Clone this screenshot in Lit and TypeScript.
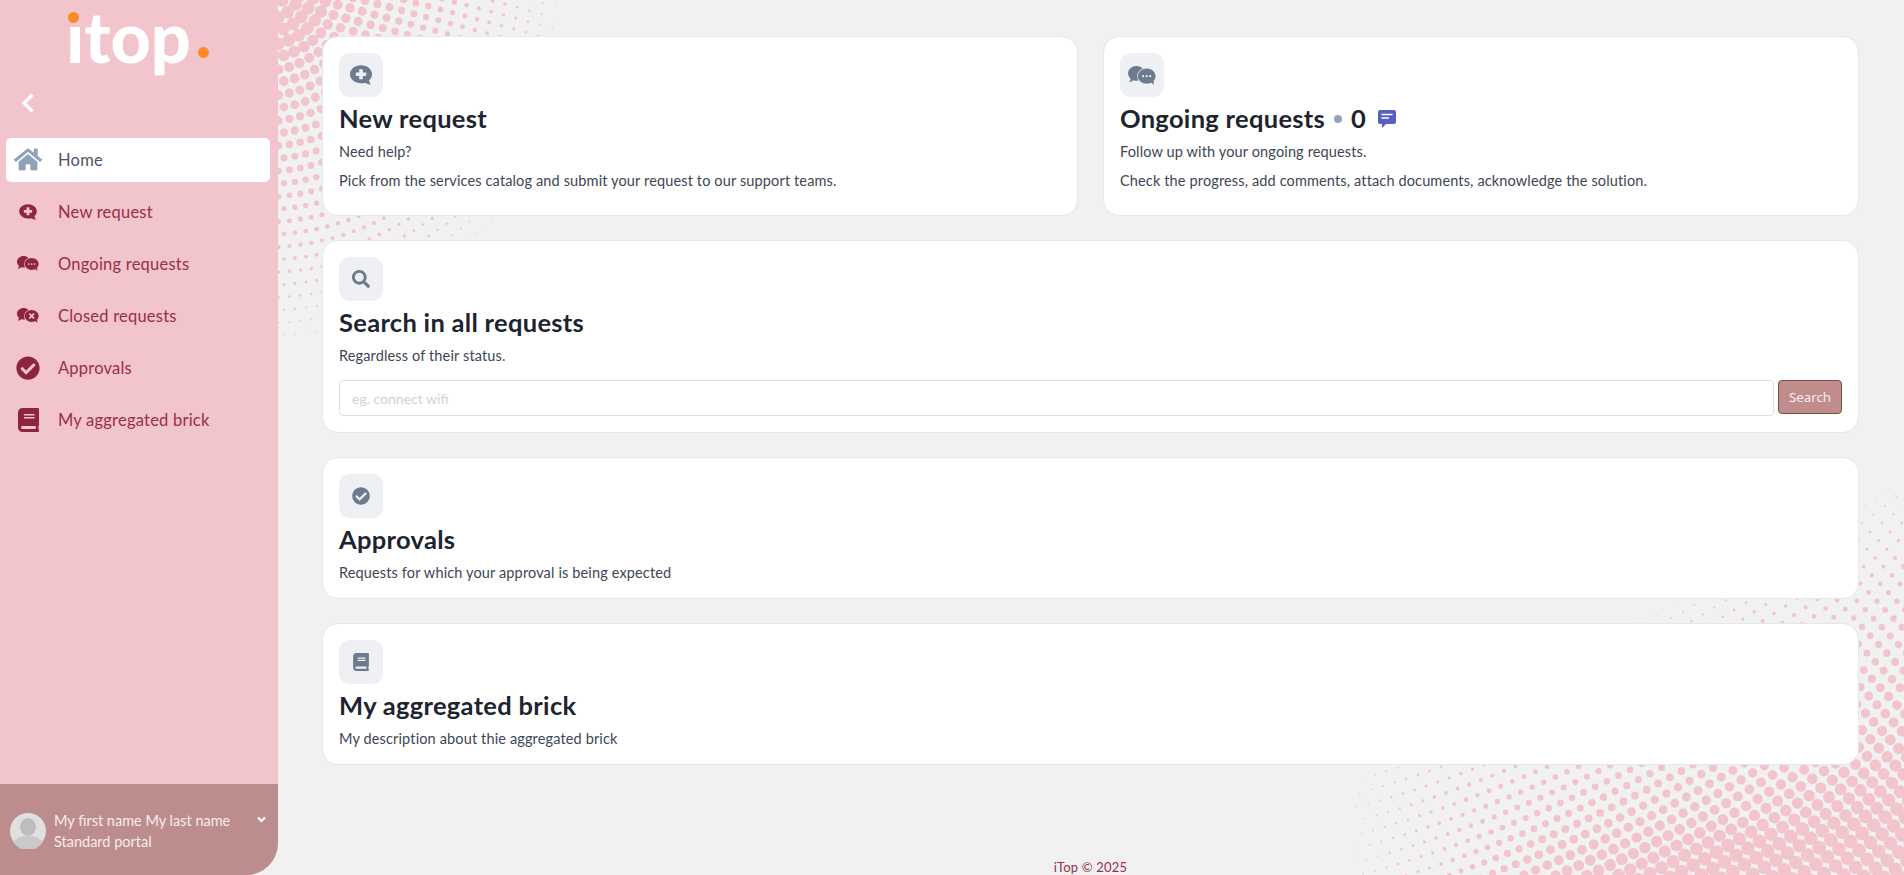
import { LitElement, html, css, svg } from "lit";
import { customElement } from "lit/decorators.js";

const PINK = "#f2c4cb";

function dot(x: number, y: number, r: number) {
  const R = r.toFixed(2);
  return `M${(x - r).toFixed(1)} ${y.toFixed(1)}a${R} ${R} 0 1 0 ${(2 * r).toFixed(2)} 0a${R} ${R} 0 1 0 ${(-2 * r).toFixed(2)} 0z`;
}

function bottomRight(): string {
  let d = "";
  const row = 13;
  const step = 11.6;
  for (let v = -30; v < 70; v++) {
    for (let i = 0; i < 60; i++) {
      const u = i * step + (v % 2 ? step / 2 : 0);
      const x = 1340 + u + v * 2.5;
      const curve = 0.25 * u + 0.00045 * u * u;
      const y = 880 + v * row - curve;
      const dx = 1904 - x;
      const dy = 875 - y;
      if (dx < -8 || dy < -8) continue;
      const t = Math.max(dx / 550, (dy + 0.53 * dx) / 395);
      if (t >= 1) continue;
      const near = Math.min(1, Math.max(0, (470 - dx) / 120));
      const boost = 2 * near * Math.max(0, 1 - Math.max(dy, 0) / 60);
      const r = Math.min(6.8, 7.5 * (1 - Math.max(t, 0)) + 0.6 + boost);
      d += dot(x, y, r);
    }
  }
  return d;
}

function topLeft(): string {
  let d = "";
  const cx = 262;
  const cy = -22;
  for (let k = 0; k < 32; k++) {
    const rad = 30 + k * 12.6;
    const da = 11 / rad;
    const off = k % 2 ? da / 2 : 0;
    for (let a = off; a < Math.PI / 2 + 0.2; a += da) {
      const x = cx + rad * Math.sin(a);
      const y = cy + rad * Math.cos(a);
      if (x < 274 || y < -8) continue;
      const t = Math.hypot((x - 278) / 285, y / 345);
      if (t >= 1) continue;
      const r = Math.min(6.4, 5.6 * (1 - t) + 0.5 + 3.2 * Math.max(0, (0.2 - t) / 0.2));
      d += dot(x, y, r);
    }
  }
  return d;
}

const HOME = "M280.37 148.26L96 300.11V464a16 16 0 0 0 16 16l112.06-.29a16 16 0 0 0 15.92-16V368a16 16 0 0 1 16-16h64a16 16 0 0 1 16 16v95.64a16 16 0 0 0 16 16.05L464 480a16 16 0 0 0 16-16V300L295.67 148.26a12.19 12.19 0 0 0-15.3 0zM571.6 251.47L488 182.56V44.05a12 12 0 0 0-12-12h-56a12 12 0 0 0-12 12v72.61L318.47 43a48 48 0 0 0-61 0L4.34 251.47a12 12 0 0 0-1.6 16.9l25.5 31A12 12 0 0 0 45.15 301l235.22-193.74a12.19 12.19 0 0 1 15.3 0L530.9 301a12 12 0 0 0 16.9-1.6l25.5-31a12 12 0 0 0-1.7-16.93z";
const CHECK = "M504 256c0 136.967-111.033 248-248 248S8 392.967 8 256 119.033 8 256 8s248 111.033 248 248zM227.314 387.314l184-184c6.248-6.248 6.248-16.379 0-22.627l-22.627-22.627c-6.248-6.249-16.379-6.249-22.628 0L216 308.118l-70.059-70.059c-6.248-6.248-16.379-6.248-22.628 0l-22.627 22.627c-6.248 6.248-6.248 16.379 0 22.627l104 104c6.249 6.249 16.379 6.249 22.628.001z";
const BOOK = "M448 360V24c0-13.3-10.7-24-24-24H96C43 0 0 43 0 96v320c0 53 43 96 96 96h328c13.3 0 24-10.7 24-24v-16c0-7.5-3.5-14.3-8.9-18.7-4.2-15.4-4.2-59.3 0-74.7 5.4-4.3 8.9-11.1 8.9-18.6zM128 134c0-3.3 2.7-6 6-6h212c3.3 0 6 2.7 6 6v20c0 3.3-2.7 6-6 6H134c-3.3 0-6-2.7-6-6v-20zm0 64c0-3.3 2.7-6 6-6h212c3.3 0 6 2.7 6 6v20c0 3.3-2.7 6-6 6H134c-3.3 0-6-2.7-6-6v-20zm253.4 250H96c-17.7 0-32-14.3-32-32 0-17.6 14.4-32 32-32h285.4c-1.9 17.1-1.9 46.9 0 64z";
const SEARCH = "M505 442.7L405.3 343c-4.5-4.5-10.6-7-17-7H372c27.6-35.3 44-79.7 44-128C416 93.1 322.9 0 208 0S0 93.1 0 208s93.1 208 208 208c48.3 0 92.7-16.4 128-44v16.3c0 6.4 2.5 12.5 7 17l99.7 99.7c9.4 9.4 24.6 9.4 33.9 0l28.3-28.3c9.4-9.4 9.4-24.6.1-34zM208 336c-70.7 0-128-57.2-128-128 0-70.7 57.2-128 128-128 70.7 0 128 57.2 128 128 0 70.7-57.2 128-128 128z";

const solid = (w: number, h: number, vb: string, d: string) => html`<svg width=${w} height=${h} viewBox=${vb} fill="currentColor"><path fill-rule="evenodd" d=${d}></path></svg>`;

/* Round bubble with its tail at the lower right and a plus knocked out of it. */
const plusBubble = (w: number, h: number) => html`<svg width=${w} height=${h} viewBox="0 0 22 20" fill="currentColor">
  <path fill-rule="evenodd" d="M11 .3c6 0 11 3.9 11 8.9 0 2.400-1.100 4.500-2.900 6.100.1 1.500.8 3 2 4.200-2.200.1-4.200-.7-5.700-1.800-1.300.4-2.800.5-4.400.5C5 18.200 0 14.200 0 9.200 0 4.200 5 .3 11 .3zM9.200 4.200v3.300H5.800v3.400h3.400v3.300h3.600v-3.300h3.400V7.500h-3.400V4.200z"></path>
</svg>`;

const bubbles = (closed: boolean, w: number, h: number) => html`<svg width=${w} height=${h} viewBox="0 0 22 15" fill="currentColor">
  <path d="M6.600 0c3.600 0 6.500 2.600 6.500 5.800s-2.900 5.800-6.500 5.800c-.9 0-1.700-.1-2.500-.4-.8.700-1.900 1.300-3.300 1.400.7-.8 1.100-1.700 1.200-2.600C.8 8.900 0 7.400 0 5.800 0 2.600 3 0 6.600 0z"></path>
  <ellipse class="ring" cx="14.700" cy="8" rx="7" ry="6"></ellipse>
  <path d="M17.500 12.500l3 2.500c-.4-1-.4-2-.2-3.500z"></path>
  ${closed
    ? svg`<path class="mark" d="M12.900 6.200l3.600 3.600M16.500 6.200l-3.600 3.600" stroke-width="1.800" stroke-linecap="round"></path>`
    : svg`<circle class="pip" cx="11.900" cy="8" r=".85"></circle><circle class="pip" cx="14.700" cy="8" r=".85"></circle><circle class="pip" cx="17.500" cy="8" r=".85"></circle>`}
</svg>`;

@customElement("app-root")
export class AppRoot extends LitElement {
  static styles = css`
    :host {
      display: flex;
      position: relative;
      width: 100%;
      height: 100vh;
      overflow: hidden;
      background: #f1f1f1;
      font-family: "Lato", "Liberation Sans", sans-serif;
      color: #3d4654;
      --chip: #eef0f3;
    }
    .halftone {
      position: absolute;
      inset: 0;
      width: 1904px;
      height: 875px;
      pointer-events: none;
    }
    .sidebar {
      position: relative;
      flex: 0 0 278px;
      display: flex;
      flex-direction: column;
      background: #f2c4cb;
      border-bottom-right-radius: 32px;
      overflow: hidden;
      --chip: #f2c4cb;
    }
    .logo {
      position: relative;
      height: 84px;
      padding-left: 66px;
      color: #fff;
      font-size: 70px;
      font-weight: 900;
      line-height: 72px;
    }
    .logo i {
      position: absolute;
      width: 11px;
      height: 11px;
      border-radius: 50%;
      background: #fd8a28;
    }
    .logo .d1 { left: 68px; top: 12px; }
    .logo .d2 { left: 198px; top: 47px; }
    .back {
      display: flex;
      height: 54px;
      padding-left: 21px;
      align-items: center;
      padding-bottom: 16px;
      box-sizing: border-box;
    }
    nav {
      display: flex;
      flex-direction: column;
      gap: 8px;
      padding: 0 8px 0 6px;
    }
    .item {
      display: flex;
      align-items: center;
      height: 44px;
      border-radius: 5px;
      color: #9b2e49;
      font-size: 16.5px;
      letter-spacing: 0.22px;
      padding-bottom: 1px;
      box-sizing: border-box;
    }
    .item.on {
      background: #fff;
      color: #4a5568;
      --chip: #fff;
    }
    .item .ic {
      flex: 0 0 44px;
      display: flex;
      justify-content: center;
      margin-right: 8px;
      color: #8f2440;
    }
    .item.on .ic { color: #8fa3b8; }
    .ring { stroke: var(--chip); stroke-width: 1.200; paint-order: stroke; }
    .pip { fill: var(--chip); }
    .mark { stroke: var(--chip); fill: none; }
    .user {
      margin-top: auto;
      height: 91px;
      background: #bd8c8c;
      display: flex;
      align-items: center;
      padding: 3px 12px 0 10px;
      gap: 8px;
      color: #f7ecec;
      font-size: 14.5px;
      line-height: 21px;
      box-sizing: border-box;
    }
    .who { flex: 1; }
    .caret { align-self: flex-start; margin-top: 29px; }
    main {
      position: relative;
      flex: 1;
      display: flex;
      flex-direction: column;
      min-width: 0;
      padding: 36px 45px 0 44px;
      gap: 24px;
    }
    .row { display: grid; grid-template-columns: 1fr 1fr; gap: 25px; }
    .card {
      background: #fff;
      border: 1px solid #e2e8f0;
      border-radius: 16px;
      padding: 16px 16px 15px;
      min-width: 0;
    }
    .chip {
      width: 44px;
      height: 44px;
      border-radius: 11px;
      background: #eef0f3;
      color: #6b7a8c;
      display: flex;
      align-items: center;
      justify-content: center;
    }
    h2 {
      margin: 7px 0 8px;
      font-size: 25.5px;
      line-height: 29px;
      letter-spacing: 0.3px;
      font-weight: 700;
      color: #1c2430;
      display: flex;
      align-items: center;
    }
    h2 .sep {
      width: 8px;
      height: 8px;
      border-radius: 50%;
      background: #94a3b8;
      margin: 0 9px;
    }
    h2 svg { margin-left: 12px; }
    p {
      margin: 0;
      font-size: 14.5px;
      line-height: 21px;
      letter-spacing: 0.14px;
    }
    p + p { margin-top: 8px; }
    .tall p:last-child { margin-bottom: 9px; }
    .search { display: flex; gap: 4px; margin: 14px 0 1px; align-items: flex-start; }
    input {
      flex: 1;
      height: 36px;
      box-sizing: border-box;
      border: 1px solid #dcdfe3;
      border-radius: 4px;
      padding: 0 12px;
      font: inherit;
      font-size: 14px;
      background: #fff;
      min-width: 0;
    }
    input::placeholder { color: #cfd2d6; opacity: 1; }
    button {
      width: 64px;
      height: 34px;
      box-sizing: border-box;
      border: 1px solid #7a5040;
      border-radius: 4px;
      background: #c08c8c;
      color: #f8ecef;
      font-family: "Noto Sans", sans-serif;
      font-size: 13.3px;
      padding: 0;
    }
    .foot {
      margin-top: auto;
      height: 16px;
      text-align: center;
      font-size: 13px;
      letter-spacing: 0.2px;
      line-height: 16px;
      color: #9b2e49;
    }
  `;

  private tl = topLeft();
  private br = bottomRight();

  private nav(label: string, icon: unknown, on = false) {
    return html`<div class="item ${on ? "on" : ""}"><span class="ic">${icon}</span>${label}</div>`;
  }

  render() {
    return html`
      <svg class="halftone" viewBox="0 0 1904 875">
        <path d=${this.tl} fill=${PINK}></path>
        <path d=${this.br} fill=${PINK}></path>
      </svg>
      <aside class="sidebar">
        <div class="logo">ıtop<i class="d1"></i><i class="d2"></i></div>
        <div class="back">
          <svg width="13" height="20" viewBox="0 0 13 20" fill="none" stroke="#fff" stroke-width="3.2" stroke-linejoin="miter"><path d="M11.5 1.500L3 10l8.500 8.500"></path></svg>
        </div>
        <nav>
          ${this.nav("Home", solid(28, 25, "0 0 576 512", HOME), true)}
          ${this.nav("New request", plusBubble(18, 16))}
          ${this.nav("Ongoing requests", bubbles(false, 22, 15))}
          ${this.nav("Closed requests", bubbles(true, 22, 15))}
          ${this.nav("Approvals", solid(24, 24, "0 0 512 512", CHECK))}
          ${this.nav("My aggregated brick", solid(21, 24, "0 0 448 512", BOOK))}
        </nav>
        <div class="user">
          <svg width="36" height="36" viewBox="0 0 36 36">
            <circle cx="18" cy="18" r="18" fill="#e0e0e0"></circle>
            <ellipse cx="18" cy="14" rx="8" ry="9" fill="#bdbdbd"></ellipse>
            <path d="M3 29c3-4 8-5 11-6h8c3 1 8 2 11 6a18 18 0 0 1-30 0z" fill="#c9c9c9"></path>
          </svg>
          <div class="who">My first name My last name<br />Standard portal</div>
          <svg class="caret" width="9" height="7" viewBox="0 0 9 7" fill="none" stroke="#fff" stroke-width="2.2"><path d="M1 1.500l3.500 3.500L8 1.500"></path></svg>
        </div>
      </aside>
      <main>
        <div class="row">
          <section class="card tall">
            <div class="chip">${plusBubble(22, 20)}</div>
            <h2>New request</h2>
            <p>Need help?</p>
            <p>Pick from the services catalog and submit your request to our support teams.</p>
          </section>
          <section class="card tall">
            <div class="chip">${bubbles(false, 28, 19)}</div>
            <h2>Ongoing requests<span class="sep"></span>0
              <svg width="18" height="18" viewBox="0 0 18 18"><path d="M2 0h14a2 2 0 0 1 2 2v10a2 2 0 0 1-2 2H8l-4 4v-4H2a2 2 0 0 1-2-2V2a2 2 0 0 1 2-2z" fill="#5a5fc7"></path><path d="M3.500 4.500h11M3.500 8h7.500" stroke="#fff" stroke-width="1.600"></path></svg>
            </h2>
            <p>Follow up with your ongoing requests.</p>
            <p>Check the progress, add comments, attach documents, acknowledge the solution.</p>
          </section>
        </div>
        <section class="card">
          <div class="chip">${solid(18, 18, "0 0 512 512", SEARCH)}</div>
          <h2>Search in all requests</h2>
          <p>Regardless of their status.</p>
          <div class="search">
            <input placeholder="eg. connect wifi" />
            <button>Search</button>
          </div>
        </section>
        <section class="card">
          <div class="chip">${solid(18, 18, "0 0 512 512", CHECK)}</div>
          <h2>Approvals</h2>
          <p>Requests for which your approval is being expected</p>
        </section>
        <section class="card">
          <div class="chip">${solid(16, 18, "0 0 448 512", BOOK)}</div>
          <h2>My aggregated brick</h2>
          <p>My description about thie aggregated brick</p>
        </section>
        <div class="foot">iTop © 2025</div>
      </main>
    `;
  }
}
